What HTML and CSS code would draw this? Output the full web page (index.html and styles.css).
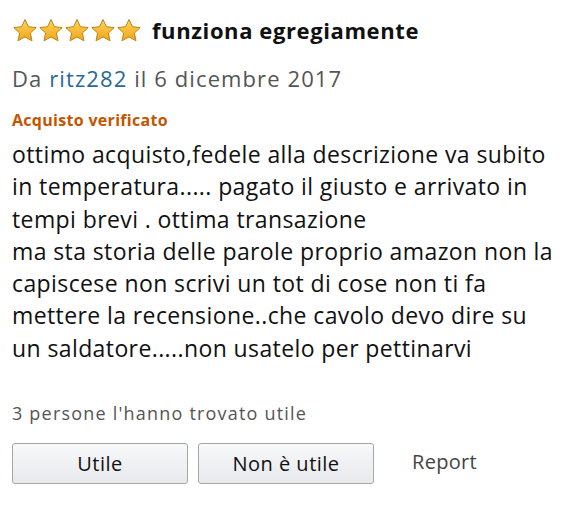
FILE: index.html
```html
<!DOCTYPE html>
<html lang="it">
<head>
<meta charset="utf-8">
<link rel="stylesheet" href="styles.css">
</head>
<body>
<svg class="defs" width="0" height="0" aria-hidden="true">
  <defs>
    <linearGradient id="starGrad" x1="0" y1="0" x2="0" y2="1">
      <stop offset="0" stop-color="#fdd55c"/>
      <stop offset="1" stop-color="#f3a319"/>
    </linearGradient>
  </defs>
</svg>
<div class="review">
  <div class="title-row">
    <div class="stars">
      <svg class="star" viewBox="0 0 26 24"><path d="M13 1.5l3.4 7.2 7.8.9-5.8 5.4 1.6 7.8L13 18.9l-7 3.9 1.6-7.8L1.8 9.6l7.8-.9z"/></svg>
      <svg class="star" viewBox="0 0 26 24"><path d="M13 1.5l3.4 7.2 7.8.9-5.8 5.4 1.6 7.8L13 18.9l-7 3.9 1.6-7.8L1.8 9.6l7.8-.9z"/></svg>
      <svg class="star" viewBox="0 0 26 24"><path d="M13 1.5l3.4 7.2 7.8.9-5.8 5.4 1.6 7.8L13 18.9l-7 3.9 1.6-7.8L1.8 9.6l7.8-.9z"/></svg>
      <svg class="star" viewBox="0 0 26 24"><path d="M13 1.5l3.4 7.2 7.8.9-5.8 5.4 1.6 7.8L13 18.9l-7 3.9 1.6-7.8L1.8 9.6l7.8-.9z"/></svg>
      <svg class="star" viewBox="0 0 26 24"><path d="M13 1.5l3.4 7.2 7.8.9-5.8 5.4 1.6 7.8L13 18.9l-7 3.9 1.6-7.8L1.8 9.6l7.8-.9z"/></svg>
    </div>
    <span class="title">funziona egregiamente</span>
  </div>
  <div class="byline">Da <span class="author">ritz282</span> il 6 dicembre 2017</div>
  <div class="verified">Acquisto verificato</div>
  <div class="body">
    <p>ottimo acquisto,fedele alla descrizione va subito<br>in temperatura..... pagato il giusto e arrivato in<br>tempi brevi . ottima transazione</p>
    <p>ma sta storia delle parole proprio amazon non la<br>capiscese non scrivi un tot di cose non ti fa<br>mettere la recensione..che cavolo devo dire su<br>un saldatore.....non usatelo per pettinarvi</p>
  </div>
  <div class="helpful">3 persone l'hanno trovato utile</div>
  <div class="actions">
    <button class="btn">Utile</button>
    <button class="btn">Non è utile</button>
    <span class="report">Report</span>
  </div>
</div>
</body>
</html>
```
FILE: styles.css
```css
html, body {
  margin: 0;
  padding: 0;
  background: #ffffff;
}
body {
  font-family: "Open Sans", "Noto Sans", sans-serif;
  color: #111111;
}
.defs {
  display: block;
  width: 0;
  height: 0;
  overflow: hidden;
}
.review {
  padding: 15px 12px 0 12px;
}
.title-row {
  display: flex;
  align-items: center;
  gap: 10px;
  height: 30px;
}
.stars {
  display: flex;
  gap: 0;
}
.star {
  width: 26px;
  height: 24px;
  fill: url(#starGrad);
  stroke: #b98516;
  stroke-width: 1;
  stroke-linejoin: round;
}
.title {
  font-size: 22px;
  font-weight: 700;
  letter-spacing: 0.6px;
  color: #111;
}
.byline {
  margin-top: 18px;
  font-size: 22px;
  letter-spacing: 1.1px;
  color: #555;
  line-height: 30px;
}
.author {
  color: #2a6a95;
}
.verified {
  margin-top: 17px;
  font-size: 16px;
  font-weight: 700;
  letter-spacing: 0.3px;
  color: #c45500;
  line-height: 20px;
}
.body {
  margin-top: 8px;
  font-size: 23px;
  letter-spacing: 0.4px;
  line-height: 32.3px;
  color: #111;
  white-space: nowrap;
}
.body p {
  margin: 0;
}
.helpful {
  margin-top: 37px;
  font-size: 18px;
  letter-spacing: 1.2px;
  color: #555;
  line-height: 24px;
}
.actions {
  margin-top: 18px;
  display: flex;
  align-items: center;
  gap: 10px;
}
.btn {
  width: 176px;
  height: 41px;
  border: 1px solid #a6a6a6;
  border-radius: 3px;
  background: linear-gradient(#f7f8fa, #e7e9ec);
  font-family: inherit;
  font-size: 20px;
  letter-spacing: 0.5px;
  color: #111;
  padding: 0;
}
.report {
  margin-left: 28px;
  font-size: 20px;
  letter-spacing: 0.3px;
  color: #444;
  margin-bottom: 4px;
}
```
